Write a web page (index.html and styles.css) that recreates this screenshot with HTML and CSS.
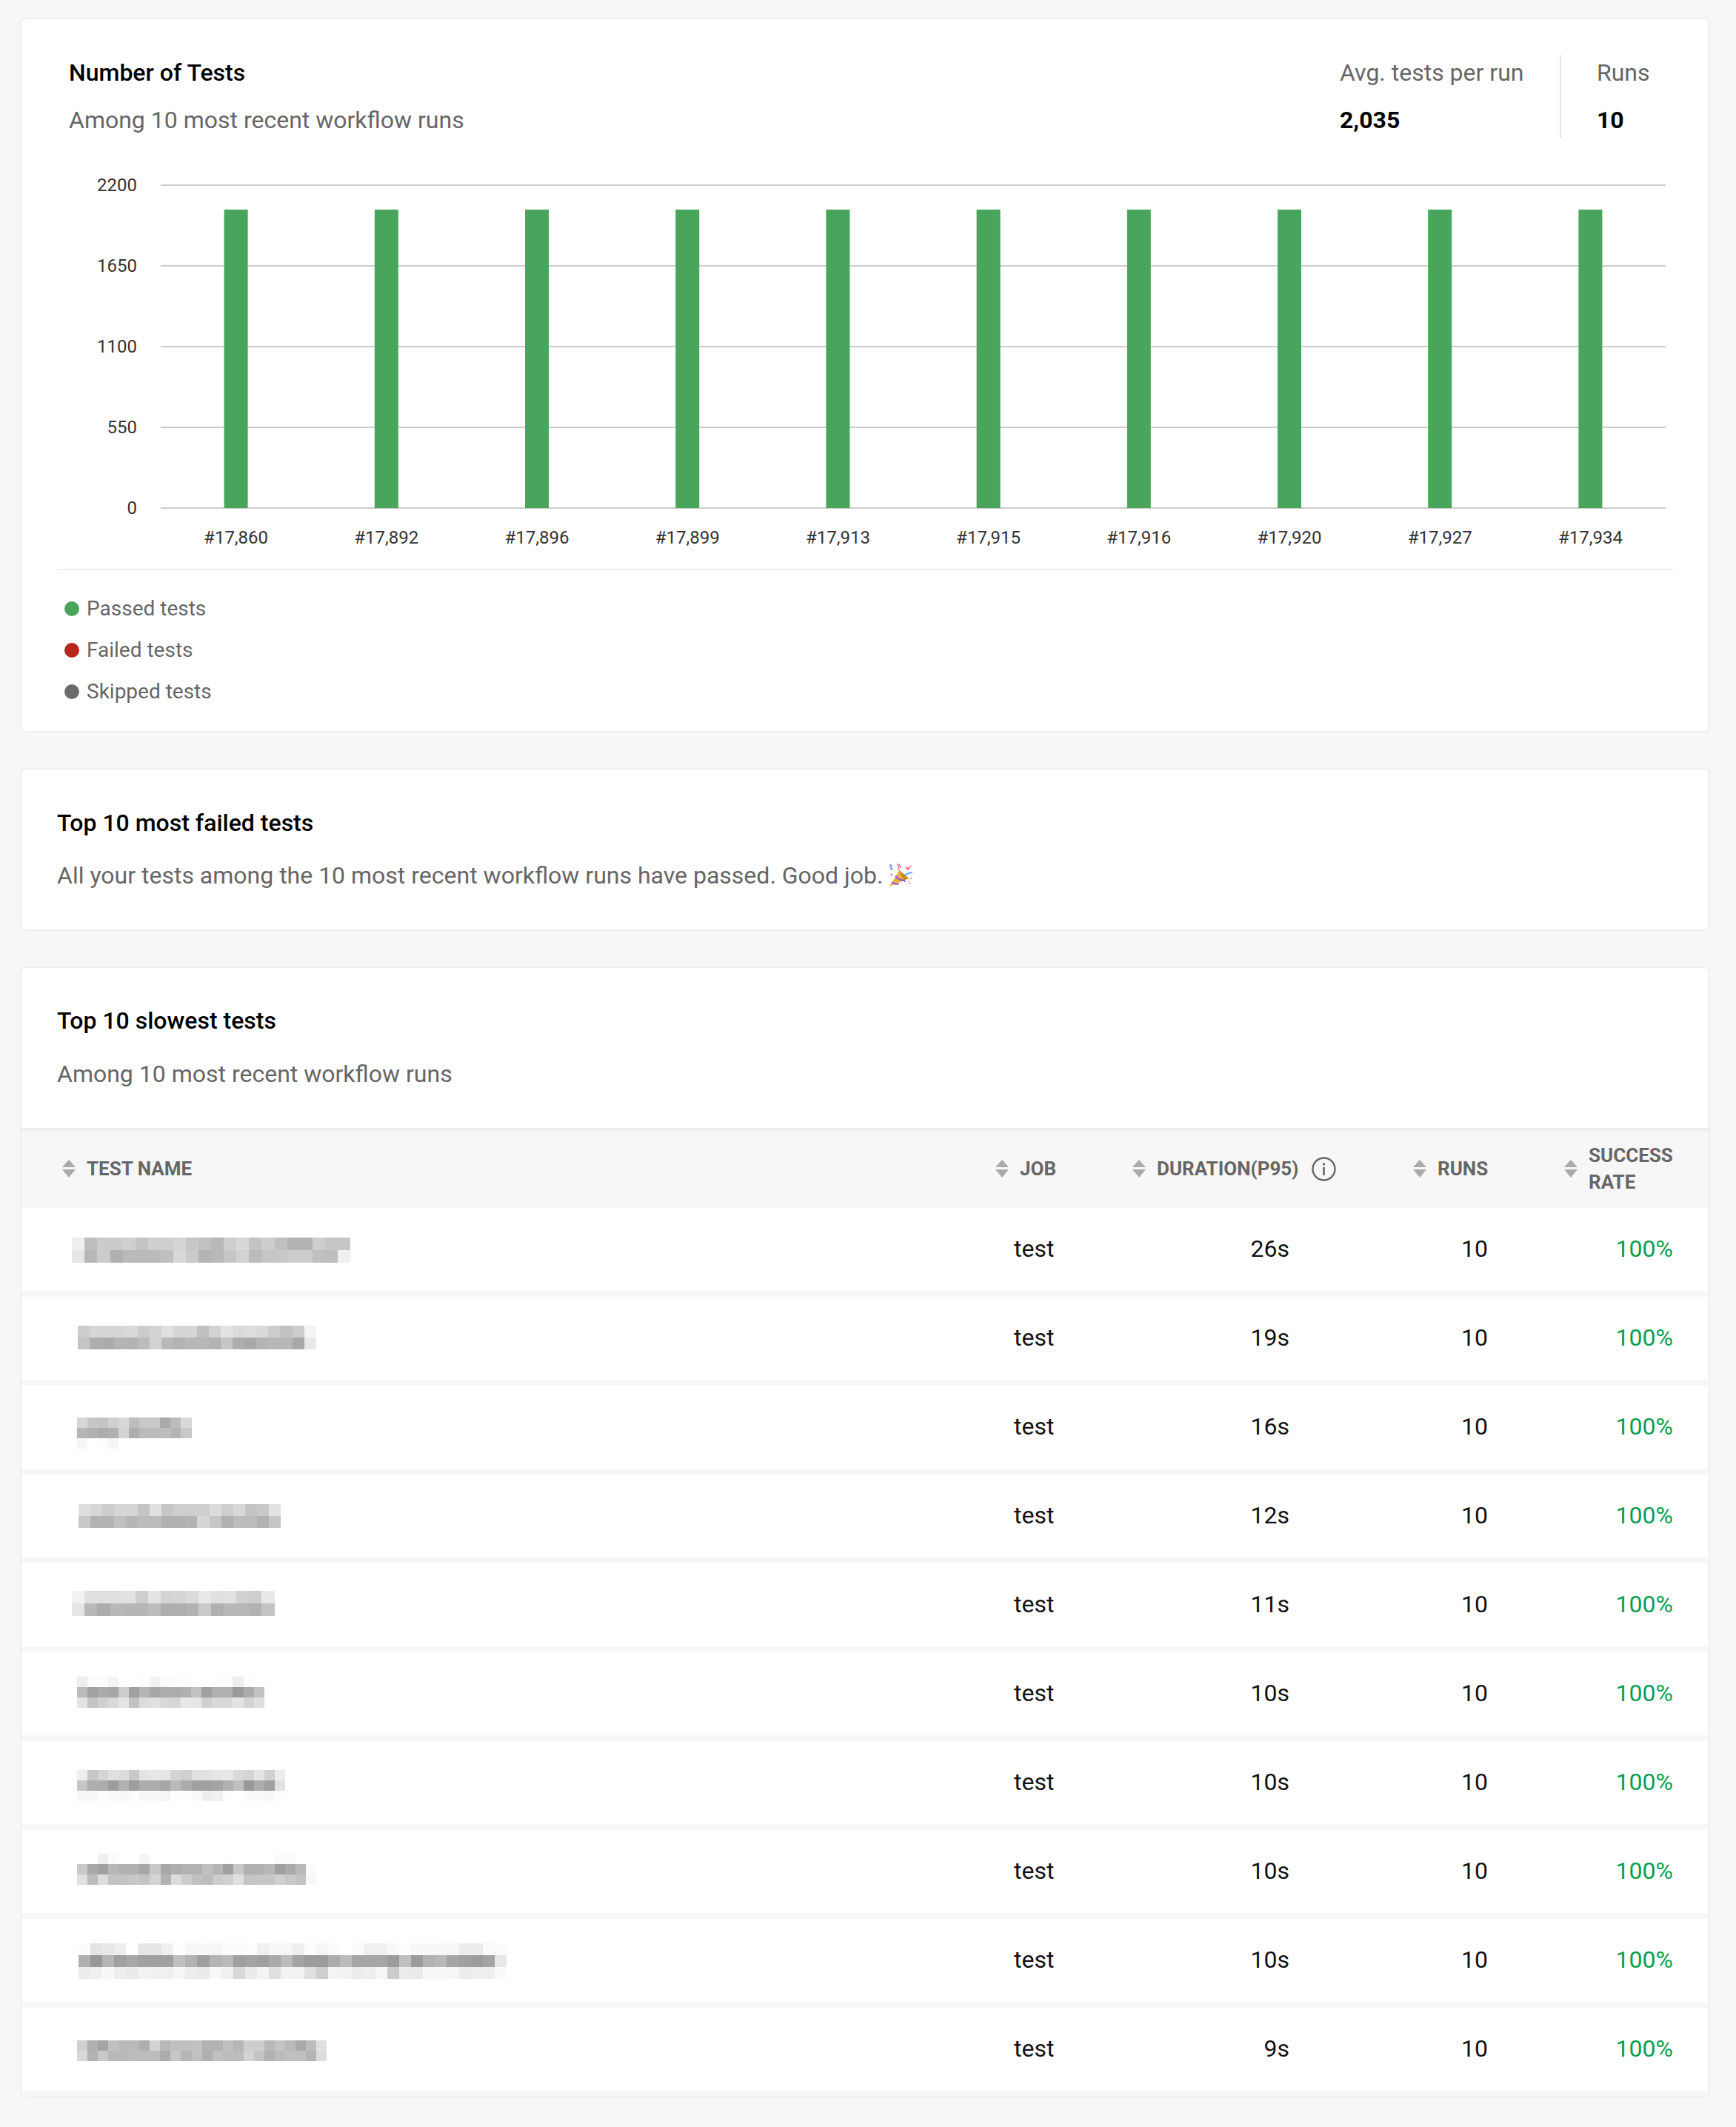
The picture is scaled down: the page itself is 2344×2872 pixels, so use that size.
FILE: index.html
```html
<!DOCTYPE html>
<html lang="en">
<head>
  <meta charset="UTF-8" />
  <title>Test insights</title>
  <link rel="stylesheet" href="styles.css">
</head>
<body>

<!-- Number of tests -->
<section class="card">
  <div class="summary">
    <div class="summary-title">
      <h2 class="card-title">Number of Tests</h2>
      <p class="card-sub">Among 10 most recent workflow runs</p>
    </div>
    <div class="stat stat-avg">
      <span class="stat-label">Avg. tests per run</span>
      <strong class="stat-value">2,035</strong>
    </div>
    <div class="stat stat-runs">
      <span class="stat-label">Runs</span>
      <strong class="stat-value">10</strong>
    </div>
  </div>

  <svg class="chart" width="2278" height="582" viewBox="0 0 2278 582">
    <g class="grid">
      <rect x="188" y="63" width="2032" height="2"/>
      <rect x="188" y="172" width="2032" height="2"/>
      <rect x="188" y="281" width="2032" height="2"/>
      <rect x="188" y="390" width="2032" height="2"/>
      <rect x="188" y="499" width="2032" height="2"/>
    </g>
    <g class="bars">
      <rect x="273.6" y="97" width="32" height="403"/>
      <rect x="476.8" y="97" width="32" height="403"/>
      <rect x="680" y="97" width="32" height="403"/>
      <rect x="883.2" y="97" width="32" height="403"/>
      <rect x="1086.4" y="97" width="32" height="403"/>
      <rect x="1289.6" y="97" width="32" height="403"/>
      <rect x="1492.8" y="97" width="32" height="403"/>
      <rect x="1696" y="97" width="32" height="403"/>
      <rect x="1899.2" y="97" width="32" height="403"/>
      <rect x="2102.4" y="97" width="32" height="403"/>
    </g>
    <g class="y-labels">
      <text x="156" y="72">2200</text>
      <text x="156" y="181">1650</text>
      <text x="156" y="290">1100</text>
      <text x="156" y="399">550</text>
      <text x="156" y="508">0</text>
    </g>
    <g class="x-labels">
      <text x="289.6" y="548">#17,860</text>
      <text x="492.8" y="548">#17,892</text>
      <text x="696" y="548">#17,896</text>
      <text x="899.2" y="548">#17,899</text>
      <text x="1102.4" y="548">#17,913</text>
      <text x="1305.6" y="548">#17,915</text>
      <text x="1508.8" y="548">#17,916</text>
      <text x="1712" y="548">#17,920</text>
      <text x="1915.2" y="548">#17,927</text>
      <text x="2118.4" y="548">#17,934</text>
    </g>
  </svg>

  <ul class="legend">
    <li><i class="dot dot-passed"></i>Passed tests</li>
    <li><i class="dot dot-failed"></i>Failed tests</li>
    <li><i class="dot dot-skipped"></i>Skipped tests</li>
  </ul>
</section>

<!-- Most failed -->
<section class="card card-failed">
  <h2 class="card-title">Top 10 most failed tests</h2>
  <p class="card-sub">All your tests among the 10 most recent workflow runs have passed. Good job.
    <svg class="party" width="32" height="32" viewBox="10 8 32 32">
      <path d="M11 40 L24 18 L37 29 Z" fill="#e9b23a"/>
      <path d="M24 18 L37 29 L30 32 Z" fill="#c98a1e"/>
      <path d="M19 26 Q24 32 32 32" fill="none" stroke="#a24fd6" stroke-width="2"/>
      <path d="M14 34 Q18 38 24 36" fill="none" stroke="#a24fd6" stroke-width="2"/>
      <path d="M30 26 Q35 22 42 21" fill="none" stroke="#4f8df0" stroke-width="1.6"/>
      <path d="M11 11 Q15 11 13 14 Q11 16 16 17" fill="none" stroke="#4a6fd8" stroke-width="1.3"/>
      <path d="M22 9 L24 18 M24 10 L26 15" fill="none" stroke="#e8557c" stroke-width="1.3"/>
      <path d="M33 16 L35 14 L36 17 L39 13 L41 12" fill="none" stroke="#e8557c" stroke-width="1.3"/>
      <circle cx="13.5" cy="24" r="1.2" fill="#e8557c"/>
      <circle cx="40" cy="29" r="1.2" fill="#f0a860"/>
      <circle cx="37" cy="33" r="1" fill="#f0a860"/>
      <circle cx="38.5" cy="36" r="1.2" fill="#f08aa8"/>
      <circle cx="32" cy="33" r="1" fill="#4f8df0"/>
    </svg>
  </p>
</section>

<!-- Slowest tests -->
<section class="card card-slowest">
  <div class="card-head">
    <h2 class="card-title">Top 10 slowest tests</h2>
    <p class="card-sub">Among 10 most recent workflow runs</p>
  </div>

  <svg class="defs" width="0" height="0">
    <symbol id="sort" viewBox="0 0 18 24">
      <path d="M9 0 L18 10 H0 Z"/>
      <path d="M9 24 L0 13 H18 Z"/>
    </symbol>
  </svg>

  <div class="table">
    <div class="t-row t-header">
      <div class="th"><svg class="sort"><use href="#sort"/></svg>TEST NAME</div>
      <div class="th"><svg class="sort"><use href="#sort"/></svg>JOB</div>
      <div class="th"><svg class="sort"><use href="#sort"/></svg>DURATION(P95)
        <svg class="info" width="33" height="33" viewBox="0 0 33 33">
          <circle cx="16.5" cy="16.5" r="15" fill="none" stroke="#666" stroke-width="2.4"/>
          <circle cx="16.5" cy="10" r="1.7" fill="#666"/>
          <rect x="15.2" y="14" width="2.6" height="11" fill="#666"/>
        </svg>
      </div>
      <div class="th"><svg class="sort"><use href="#sort"/></svg>RUNS</div>
      <div class="th"><svg class="sort"><use href="#sort"/></svg><span>SUCCESS<br>RATE</span></div>
    </div>

    <div class="t-row"><div class="name"><div class="blur"></div></div><div class="job">test</div><div class="dur">26s</div><div class="runs">10</div><div class="rate">100%</div></div>
    <div class="t-row"><div class="name"><div class="blur"></div></div><div class="job">test</div><div class="dur">19s</div><div class="runs">10</div><div class="rate">100%</div></div>
    <div class="t-row"><div class="name"><div class="blur"></div></div><div class="job">test</div><div class="dur">16s</div><div class="runs">10</div><div class="rate">100%</div></div>
    <div class="t-row"><div class="name"><div class="blur"></div></div><div class="job">test</div><div class="dur">12s</div><div class="runs">10</div><div class="rate">100%</div></div>
    <div class="t-row"><div class="name"><div class="blur"></div></div><div class="job">test</div><div class="dur">11s</div><div class="runs">10</div><div class="rate">100%</div></div>
    <div class="t-row"><div class="name"><div class="blur"></div></div><div class="job">test</div><div class="dur">10s</div><div class="runs">10</div><div class="rate">100%</div></div>
    <div class="t-row"><div class="name"><div class="blur"></div></div><div class="job">test</div><div class="dur">10s</div><div class="runs">10</div><div class="rate">100%</div></div>
    <div class="t-row"><div class="name"><div class="blur"></div></div><div class="job">test</div><div class="dur">10s</div><div class="runs">10</div><div class="rate">100%</div></div>
    <div class="t-row"><div class="name"><div class="blur"></div></div><div class="job">test</div><div class="dur">10s</div><div class="runs">10</div><div class="rate">100%</div></div>
    <div class="t-row"><div class="name"><div class="blur"></div></div><div class="job">test</div><div class="dur">9s</div><div class="runs">10</div><div class="rate">100%</div></div>
  </div>
</section>

<script src="script.js"></script>
</body>
</html>
```

FILE: styles.css
```css
* {
    box-sizing: border-box;
}

body {
    margin: 0;
    padding: 24px 35px 40px 27px;
    background: #f7f7f7;
    font-family: Roboto, "Liberation Sans", sans-serif;
    color: #111;
}

h2, p, ul {
    margin: 0;
    padding: 0;
}

/* Cards */
.card {
    background: #fff;
    border: 2px solid #eee;
    border-radius: 8px;
    margin-bottom: 48px;
}

.card:last-child {
    margin-bottom: 0;
}

.card-title {
    font-size: 32px;
    line-height: 44px;
    font-weight: 500;
    color: #000;
}

.card-sub {
    font-size: 32px;
    line-height: 44px;
    color: #666;
}

/* Summary header */
.summary {
    display: flex;
    padding-top: 48px;
    padding-left: 64px;
}

.summary-title {
    flex: 1;
    display: flex;
    flex-direction: column;
    gap: 20px;
    padding-top: 2px;
}

.stat {
    display: flex;
    flex-direction: column;
    gap: 16px;
    font-size: 32px;
    line-height: 48px;
}

.stat-avg {
    width: 299px;
    border-right: 2px solid #e4e4e4;
}

.stat-runs {
    width: 199px;
    padding-left: 48px;
}

.stat-label {
    color: #666;
}

.stat-value {
    font-weight: 700;
    color: #000;
}

/* Chart */
.chart {
    display: block;
}

.grid rect {
    fill: #ccc;
}

.bars rect {
    fill: #49a55c;
}

.y-labels text,
.x-labels text {
    font-size: 24px;
    fill: #333;
}

.y-labels text {
    text-anchor: end;
}

.x-labels text {
    text-anchor: middle;
}

/* Legend */
.legend {
    list-style: none;
    margin: 0 48px;
    padding: 24px 10px 25px;
    border-top: 2px solid #eee;
    font-size: 28px;
    line-height: 56px;
    color: #666;
}

.legend li {
    display: flex;
    align-items: center;
    gap: 10px;
}

.dot {
    width: 20px;
    height: 20px;
    border-radius: 50%;
}

.dot-passed { background: #49a55c; }
.dot-failed { background: #b7261e; }
.dot-skipped { background: #6b6b6b; }

/* Most failed */
.card-failed {
    padding: 50px 48px 51px;
}

.card-failed .card-sub {
    margin-top: 27px;
}

.party {
    vertical-align: -4px;
}

/* Slowest table */
.card-head {
    padding: 49px 48px 51px;
    border-bottom: 4px solid #eee;
}

.card-head .card-sub {
    margin-top: 28px;
}

.defs {
    display: block;
    height: 0;
}

.t-row {
    display: grid;
    grid-template-columns: 1315px 185px 379px 204px 195px;
    height: 120px;
    padding-bottom: 2px;
    border-bottom: 8px solid #f7f7f7;
    align-items: center;
    font-size: 32px;
}

.t-header {
    height: 104px;
    border-bottom: 0;
    background: #f7f7f7;
}

.th {
    display: flex;
    align-items: center;
    gap: 15px;
    font-size: 26px;
    line-height: 36px;
    font-weight: 700;
    color: #666;
}

.th:first-child {
    padding-left: 55px;
}

.sort {
    width: 18px;
    height: 24px;
    flex-shrink: 0;
    fill: #aaa;
}

.info {
    margin-left: 3px;
}

.name {
    align-self: start;
}

.blur-line {
    display: flex;
}

.blur-line span {
    flex-shrink: 0;
}

.job {
    padding-left: 25px;
}

.dur {
    text-align: right;
    padding-right: 167px;
}

.runs {
    text-align: right;
    padding-right: 103px;
}

.rate {
    text-align: right;
    padding-right: 48px;
    color: #0a9e4f;
}
```

FILE: script.js
```js
// pixelated test names: x, y inside the row, block size, then one string per line
const names = [
  [68.3, 40, 17.09, [
    'ee bd cb cb d0 c4 cf cf d5 c6 c1 b8 ce d7 c4 cd c0 b3 b3 ce c6 c6',
    'e6 b8 cb b0 ba ba ba c0 d8 ca b4 b8 c6 d2 bb c6 c8 cc cc c0 be f0']],
  [76.4, 39, 16.07, [
    'cc d6 d6 d6 d9 cc d2 e0 d6 d6 c0 d2 e2 da de d9 cc c2 cc f4',
    'c4 ae ab b4 b2 bc d2 b8 b2 b8 b8 b2 c6 ae a8 b4 b8 b6 a8 e8']],
  [75, 43, 14.06, [
    'd6 c6 c4 d0 d8 be c8 c8 aa bc d8',
    'b6 b0 ac b0 d4 ae ba bc be b4 c8',
    'f5 ff fc f5 ff ff ff ff ff ff ff']],
  [77, 40, 16.06, [
    'de d6 cc d6 d6 c4 e0 c6 ce ce ce dc ce d8 c4 c8 e2',
    'c8 b2 b4 c0 b6 bc bc b2 b0 b4 d6 c6 b0 bc bc b2 c6']],
  [68.3, 37, 17.09, [
    'f2 e0 e0 e0 e2 ce e4 d4 d6 da e8 e0 e2 d0 ce e8',
    'e6 b8 ac b8 b6 b6 bc ae ae b2 ca b0 b8 b8 b2 c4']],
  [75, 33, 14.04, [
    'ee fc fd f4 ff ff fd f2 fb fd fd ff ff fd fd ee fd fe',
    'bc a2 aa a6 cc a0 b4 a6 ac ac b0 c2 a0 b0 b0 9a ac c2',
    'e4 c4 d0 d8 e4 c2 dc e0 d8 d6 e8 e6 d0 d8 d8 e4 d4 de']],
  [75, 39, 14.05, [
    'ee c6 d4 e0 dc c8 e4 e8 e6 d4 d0 e0 e2 e6 e8 da d4 e4 d0 ec',
    'c6 ae ac 9c b0 9e ac ac a6 ba ac a0 a0 a4 b2 c0 98 ac a0 e2',
    'f8 f8 fd fa f8 fd f8 f8 f6 fe fe fa ee f0 fd ff fa fa f8 fd']],
  [75, 32, 14.07, [
    'ff ff f0 fb ff ff f4 ff ff ff ff ff ff ff fd ff ff ff ff fb fb ff ff',
    'c8 a8 a0 b8 b0 b0 a6 c8 a8 ae b2 b2 c0 b4 a0 c8 b0 b0 b8 a0 aa ba fa',
    'e0 bc dc c2 c4 c8 c4 d4 b2 dc cc c0 bc cc d0 e0 c4 c6 c6 d0 c8 c4 f8']],
  [77, 33, 16.05, [
    'fc e4 e8 ee ff e6 e6 f0 fd f6 f8 f6 fb fb fd f0 f6 f6 ee fc f6 fb ff fb f0 f0 f8 fd f8 f8 f8 f6 ec ec fa fc',
    'b0 98 b6 a0 a8 a0 a0 a0 c0 b2 a0 b4 ba a0 a4 a0 aa bc a4 9c 9c ac bc a6 a6 a6 9c c0 9c b2 b8 a4 a0 9c a4 e8',
    'ec f0 f8 ee ea f2 f0 f0 f6 ee ea f8 f0 d8 ea f4 e0 f2 f2 e0 ce f4 f2 ec ee f6 cc ec ea f8 f8 f6 ec ee ee fa']],
  [75, 44, 14.05, [
    'd0 b0 a4 c0 ba ba ae d4 b8 c0 c0 c2 b2 b2 c0 b6 ce ce b8 c4 ba aa bc e0',
    'd8 b2 c8 b8 b8 bc bc bc ac c6 b6 c0 b0 c0 bc bc d4 c4 b2 bc c0 c0 b4 dc']]
];

document.querySelectorAll('.blur').forEach((el, i) => {
  const [x, y, size, lines] = names[i];
  el.style.margin = `${y}px 0 0 ${x}px`;
  lines.forEach((line) => {
    const row = document.createElement('div');
    row.className = 'blur-line';
    line.split(' ').forEach((g) => {
      const px = document.createElement('span');
      px.style.width = px.style.height = `${size}px`;
      px.style.background = `#${g}${g}${g}`;
      row.appendChild(px);
    });
    el.appendChild(row);
  });
});
```
